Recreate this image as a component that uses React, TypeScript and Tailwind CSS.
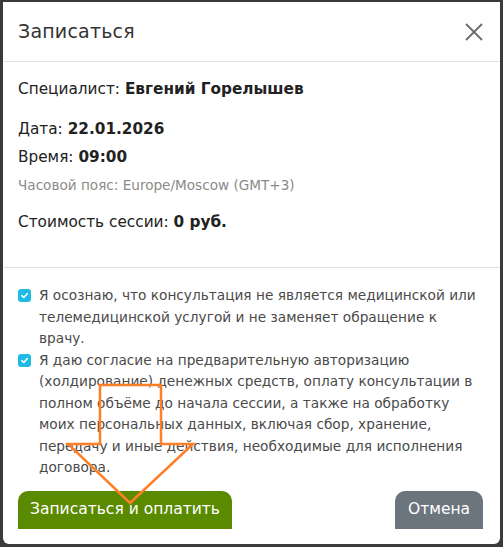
import React from "react";

const font = { fontFamily: '"DejaVu Sans", "Noto Sans", sans-serif' };

function Check() {
  return (
    <span className="mt-[4px] flex h-[13px] w-[13px] shrink-0 items-center justify-center rounded-[3px] bg-[#1fbbe3]">
      <svg width="9" height="9" viewBox="0 0 10 10">
        <path d="M2 5.2 L4.2 7.2 L8 3" fill="none" stroke="white" strokeWidth="1.8" strokeLinecap="round" strokeLinejoin="round" />
      </svg>
    </span>
  );
}

export default function App() {
  const l1 = ["Я осознаю, что консультация не является медицинской или", "телемедицинской услугой и не заменяет обращение к", "врачу."];
  const l2 = [
    "Я даю согласие на предварительную авторизацию",
    "(холдирование) денежных средств, оплату консультации в",
    "полном объёме до начала сессии, а также на обработку",
    "моих персональных данных, включая сбор, хранение,",
    "передачу и иные действия, необходимые для исполнения",
    "договора.",
  ];
  return (
    <div className="relative h-[547px] w-[503px] overflow-hidden bg-[#3a3a3a] pl-[3px] pr-[3px] pt-[2px] pb-[3px]" style={font}>
      <div className="flex h-[542px] flex-col rounded-b-[6px] bg-white">
        <div className="flex h-[60px] shrink-0 items-center justify-between border-b border-[#dee2e6] pl-[15px] pr-[15px]">
          <span className="text-[19px] tracking-[0.2px] text-[#333]">Записаться</span>
          <svg width="18" height="18" viewBox="0 0 18 18" className="mr-[2px]">
            <path d="M1 1 L17 17 M17 1 L1 17" stroke="#6b6b6b" strokeWidth="1.8" />
          </svg>
        </div>
        <div className="flex h-[206px] shrink-0 flex-col border-b border-[#dee2e6] px-[15px] pt-[15px] text-[#222]">
          <div className="h-[24px] whitespace-nowrap text-[15.3px] leading-[24px]">
            Специалист: <b className="font-bold">Евгений Горелышев</b>
          </div>
          <div className="mt-[16px] h-[24px] text-[15.3px] leading-[24px]">
            Дата: <b className="font-bold">22.01.2026</b>
          </div>
          <div className="mt-[4px] h-[24px] text-[15.3px] leading-[24px]">
            Время: <b className="font-bold">09:00</b>
          </div>
          <div className="mt-[4px] h-[24px] whitespace-nowrap text-[13.6px] leading-[24px] text-[#8a8a8a]">
            Часовой пояс: Europe/Moscow (GMT+3)
          </div>
          <div className="mt-[13px] h-[24px] text-[15.3px] leading-[24px]">
            Стоимость сессии: <b className="font-bold">0 руб.</b>
          </div>
        </div>
        <div className="flex flex-1 flex-col px-[15px] pt-[17px] pb-[15px]">
          <div className="flex gap-[8px]">
            <Check />
            <div className="text-[13.7px] leading-[21.5px] text-[#4a4a4a]">
              {l1.map((t) => (
                <div key={t} className="whitespace-nowrap">{t}</div>
              ))}
            </div>
          </div>
          <div className="flex gap-[8px]">
            <Check />
            <div className="text-[13.7px] leading-[21.5px] text-[#4a4a4a]">
              {l2.map((t) => (
                <div key={t} className="whitespace-nowrap">{t}</div>
              ))}
            </div>
          </div>
          <div className="mt-auto flex items-end justify-between pr-[2px]">
            <button className="flex h-[38px] w-[214px] items-center justify-center rounded-t-[10px] bg-[#5a8a00] text-[15.5px] text-white">
              Записаться и оплатить
            </button>
            <button className="flex h-[38px] w-[88px] items-center justify-center rounded-t-[10px] bg-[#6c757d] text-[15.5px] text-white">
              Отмена
            </button>
          </div>
        </div>
      </div>
      <svg className="pointer-events-none absolute left-0 top-0" width="503" height="547">
        <path
          d="M100 385 L161 385 L161 444 L193 444 L130 503 L68 444 L100 444 Z"
          fill="none"
          stroke="#ff7f27"
          strokeWidth="2.5"
          strokeLinejoin="miter"
        />
      </svg>
    </div>
  );
}
